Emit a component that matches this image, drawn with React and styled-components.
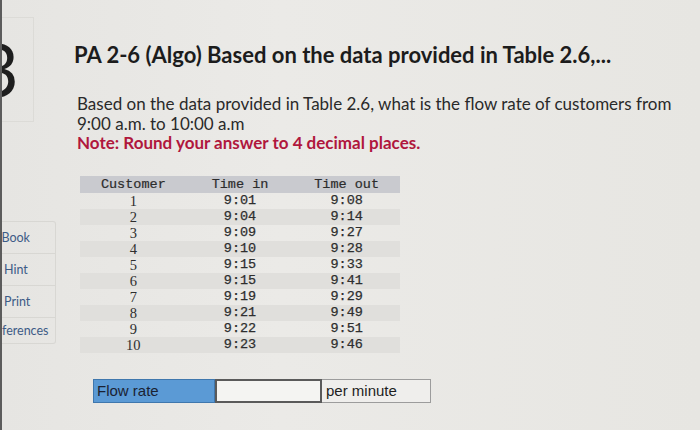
import React from 'react';
import styled, { createGlobalStyle } from 'styled-components';

const GlobalStyle = createGlobalStyle`
  html, body {
    margin: 0;
    padding: 0;
    background: #e9e8e5;
  }
  body {
    font-family: Lato, "Open Sans", sans-serif;
  }
`;

// Datos de la tabla 2.6
const rows = [
  ['1', '9:01', '9:08'],
  ['2', '9:04', '9:14'],
  ['3', '9:09', '9:27'],
  ['4', '9:10', '9:28'],
  ['5', '9:15', '9:33'],
  ['6', '9:15', '9:41'],
  ['7', '9:19', '9:29'],
  ['8', '9:21', '9:49'],
  ['9', '9:22', '9:51'],
  ['10', '9:23', '9:46']
];

const tools = [
  { label: 'eBook', shift: 7 },
  { label: 'Hint', shift: -2 },
  { label: 'Print', shift: -2 },
  { label: 'References', shift: 14 }
];

const Page = styled.div`
  display: flex;
  width: 700px;
  height: 430px;
  overflow: hidden;
  background: linear-gradient(90deg, #e6e5e2 0%, #ebeae7 40%, #e7e6e2 100%);
  border-left: 2px solid #5c5c5c;
  box-sizing: border-box;
`;

const Sidebar = styled.aside`
  width: 72px;
  flex-shrink: 0;
  display: flex;
  flex-direction: column;
  overflow: hidden;
`;

const NumberBox = styled.div`
  margin-top: 17px;
  width: 31px;
  height: 103px;
  border: 1px solid #dcdbd7;
  border-left: none;
  overflow: hidden;
  display: flex;
  align-items: center;
`;

const BigNumber = styled.span`
  margin-left: -26px;
  margin-top: -2px;
  font-size: 74px;
  font-weight: 400;
  line-height: 1;
  color: #1e1e1e;
  font-family: Lato, sans-serif;
`;

const ToolBox = styled.div`
  margin-top: 99px;
  width: 53px;
  border: 1px solid #d8d7d3;
  border-left: none;
  border-radius: 0 3px 3px 0;
  overflow: hidden;
`;

const ToolButton = styled.div`
  height: 31px;
  display: flex;
  align-items: center;
  border-bottom: 1px solid #d8d7d3;
  font-size: 12.5px;
  color: #3d5b86;
  white-space: nowrap;
  &:last-child {
    height: 25px;
    border-bottom: none;
  }
  span {
    margin-left: ${p => -p.shift}px;
  }
`;

const Main = styled.main`
  flex: 1;
  padding-top: 42px;
`;

const Title = styled.h1`
  margin: 0;
  font-size: 22px;
  line-height: 26px;
  font-weight: 700;
  color: #1c1c1c;
`;

const Body = styled.div`
  margin-top: 26px;
  padding-left: 3px;
  font-size: 17px;
  line-height: 19.5px;
  color: #2a2a2a;
`;

const Note = styled.div`
  font-weight: 700;
  color: #b0173d;
`;

const Table = styled.div`
  margin-top: 23px;
  margin-left: 6px;
  width: 320px;
  display: grid;
  grid-template-columns: repeat(3, 1fr);
`;

const HeadCell = styled.div`
  background: #c9cacf;
  height: 17px;
  line-height: 18px;
  text-align: center;
  font-family: "Liberation Mono", monospace;
  font-size: 13.5px;
  color: #2c2c2c;
  -webkit-text-stroke: 0.2px #2c2c2c;
`;

const Cell = styled.div`
  height: 16px;
  line-height: 16px;
  text-align: center;
  font-family: ${p => (p.serif ? '"Liberation Serif", serif' : '"Liberation Mono", monospace')};
  font-size: ${p => (p.serif ? '14.5px' : '13.5px')};
  color: #2e2e2e;
  -webkit-text-stroke: ${p => (p.serif ? '0' : '0.25px #2e2e2e')};
  background: ${p => (p.striped ? '#e0dfdc' : 'transparent')};
`;

const AnswerRow = styled.div`
  margin-top: 26px;
  margin-left: 19px;
  display: flex;
  height: 24px;
  font-family: "Liberation Sans", Arial, sans-serif;
  font-size: 15px;
  & > div {
    box-sizing: border-box;
  }
`;

const Label = styled.div`
  width: 122px;
  background: #5b9ad5;
  border: 1px solid #3f77ad;
  color: #1a2233;
  padding-left: 3px;
  display: flex;
  align-items: center;
`;

const Input = styled.div`
  width: 107px;
  background: #f4f4f2;
  border: 2px solid #5a5a5a;
`;

const Unit = styled.div`
  width: 109px;
  border: 1px solid #9c9c9c;
  border-left: none;
  background: #efeeec;
  color: #1e1e1e;
  padding-left: 4px;
  display: flex;
  align-items: center;
`;

export default function App() {
  return (
    <>
      <GlobalStyle />
      <Page>
        <Sidebar>
          <NumberBox>
            <BigNumber>3</BigNumber>
          </NumberBox>
          <ToolBox>
            {tools.map(t => (
              <ToolButton key={t.label} shift={t.shift}>
                <span>{t.label}</span>
              </ToolButton>
            ))}
          </ToolBox>
        </Sidebar>
        <Main>
          <Title>PA 2-6 (Algo) Based on the data provided in Table 2.6,...</Title>
          <Body>
            Based on the data provided in Table 2.6, what is the flow rate of customers from
            <br />
            9:00 a.m. to 10:00 a.m
            <Note>Note: Round your answer to 4 decimal places.</Note>
          </Body>
          <Table>
            <HeadCell>Customer</HeadCell>
            <HeadCell>Time in</HeadCell>
            <HeadCell>Time out</HeadCell>
            {rows.map((r, i) => (
              <React.Fragment key={r[0]}>
                <Cell serif striped={i % 2 === 1}>{r[0]}</Cell>
                <Cell striped={i % 2 === 1}>{r[1]}</Cell>
                <Cell striped={i % 2 === 1}>{r[2]}</Cell>
              </React.Fragment>
            ))}
          </Table>
          <AnswerRow>
            <Label>Flow rate</Label>
            <Input />
            <Unit>per minute</Unit>
          </AnswerRow>
        </Main>
      </Page>
    </>
  );
}
